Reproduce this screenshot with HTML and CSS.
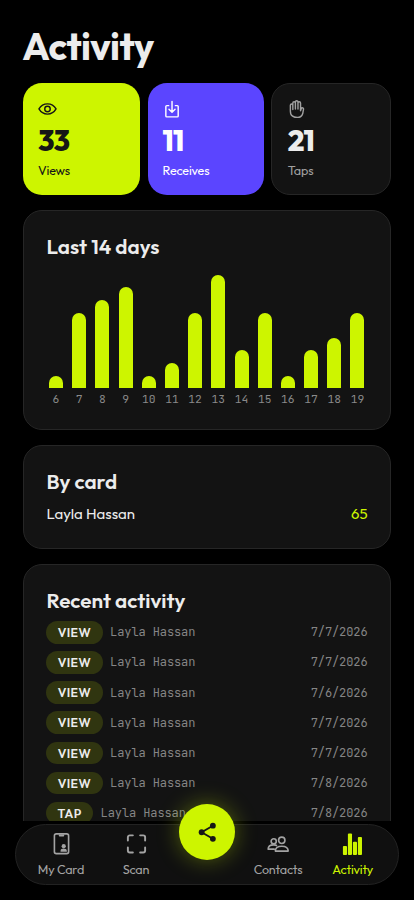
FILE: index.html
```html
<!DOCTYPE html>
<html lang="en">
<head>
<meta charset="utf-8">
<meta name="viewport" content="width=device-width, initial-scale=1">
<title>Activity</title>
<link rel="stylesheet" href="styles.css">
</head>
<body>
<main class="screen">
  <h1 class="title">Activity</h1>
  <section class="stats">
    <div class="stat stat-views">
      <svg class="stat-icon" viewBox="0 0 20 20"><path d="M1 10.500C3 7 6.300 5.100 10 5.100s7 1.900 9 5.400c-2 3.500-5.300 5.400-9 5.400S3 14 1 10.500Z"/><circle cx="10" cy="10.500" r="2.900"/></svg>
      <b class="num">33</b><span class="label">Views</span>
    </div>
    <div class="stat stat-receives">
      <svg class="stat-icon" viewBox="0 0 20 20"><path d="M6 7H4a1 1 0 0 0-1 1v9.800a1 1 0 0 0 1 1h11a1 1 0 0 0 1-1V8a1 1 0 0 0-1-1H13M9.500 2.500v11.300M6.300 10.700l3.200 3.200 3.200-3.200"/></svg>
      <b class="num">11</b><span class="label">Receives</span>
    </div>
    <div class="stat stat-taps">
      <svg class="stat-icon" viewBox="0 0 20 20"><path d="M2.500 13V6.500a1.300 1.300 0 0 1 2.600 0v4.500M5.100 10.500V4.300a1.350 1.350 0 0 1 2.700 0v6.200M7.800 10.500V3.100a1.350 1.350 0 0 1 2.700 0v7.400M10.500 10.500V4.300a1.350 1.350 0 0 1 2.700 0V12.300l.8-2.200c.6-1.300 2.600-.9 2.300.7l-.8 4.500c-.7 2.700-2.700 4.200-5.700 4.200-4.300 0-7.300-2.200-7.300-6.500"/></svg>
      <b class="num">21</b><span class="label">Taps</span>
    </div>
  </section>

  <section class="card chart-card">
    <h2 class="heading">Last 14 days</h2>
    <div class="chart">
      <div class="col"><i class="bar" style="height:12.5px"></i><span>6</span></div>
      <div class="col"><i class="bar" style="height:75.3px"></i><span>7</span></div>
      <div class="col"><i class="bar" style="height:87.8px"></i><span>8</span></div>
      <div class="col"><i class="bar" style="height:100.6px"></i><span>9</span></div>
      <div class="col"><i class="bar" style="height:12.5px"></i><span>10</span></div>
      <div class="col"><i class="bar" style="height:25.3px"></i><span>11</span></div>
      <div class="col"><i class="bar" style="height:75.3px"></i><span>12</span></div>
      <div class="col"><i class="bar" style="height:113px"></i><span>13</span></div>
      <div class="col"><i class="bar" style="height:37.7px"></i><span>14</span></div>
      <div class="col"><i class="bar" style="height:75.3px"></i><span>15</span></div>
      <div class="col"><i class="bar" style="height:12.5px"></i><span>16</span></div>
      <div class="col"><i class="bar" style="height:37.7px"></i><span>17</span></div>
      <div class="col"><i class="bar" style="height:50px"></i><span>18</span></div>
      <div class="col"><i class="bar" style="height:75.3px"></i><span>19</span></div>
    </div>
  </section>

  <section class="card by-card">
    <h2 class="heading">By card</h2>
    <div class="person"><span>Layla Hassan</span><span class="person-count">65</span></div>
  </section>

  <section class="card recent">
    <h2 class="heading">Recent activity</h2>
    <ul class="rows">
      <li><b class="pill">VIEW</b><span>Layla Hassan</span><time>7/7/2026</time></li>
      <li><b class="pill">VIEW</b><span>Layla Hassan</span><time>7/7/2026</time></li>
      <li><b class="pill">VIEW</b><span>Layla Hassan</span><time>7/6/2026</time></li>
      <li><b class="pill">VIEW</b><span>Layla Hassan</span><time>7/7/2026</time></li>
      <li><b class="pill">VIEW</b><span>Layla Hassan</span><time>7/7/2026</time></li>
      <li><b class="pill">VIEW</b><span>Layla Hassan</span><time>7/8/2026</time></li>
      <li><b class="pill pill-tap">TAP</b><span>Layla Hassan</span><time>7/8/2026</time></li>
    </ul>
  </section>
</main>

<nav class="nav">
  <a class="tab"><svg viewBox="0 0 24 24"><rect x="4.600" y="1.900" width="14.800" height="20.600" rx="2" fill="none" stroke="currentColor" stroke-width="1.700"/><path d="M9.200 2.500h5.600V4a.8.8 0 0 1-.8.8h-4a.8.8 0 0 1-.8-.8ZM11 20.700v-1c0-1.700 1.400-2.500 3.200-2.500s3.400.8 3.400 2.500v1Z" fill="currentColor"/><circle cx="14.300" cy="14.800" r="2.200" fill="currentColor"/></svg><span>My Card</span></a>
  <a class="tab"><svg viewBox="0 0 24 24"><path d="M3 8.800V5.500a2 2 0 0 1 2-2h3.200M15.800 3.500H19a2 2 0 0 1 2 2v3.300M21 16.100v3.300a2 2 0 0 1-2 2h-3.200M8.200 21.400H5a2 2 0 0 1-2-2v-3.300" fill="none" stroke="currentColor" stroke-width="2" stroke-linecap="round"/></svg><span>Scan</span></a>
  <a class="fab" aria-label="Share"><svg viewBox="0 0 24 24"><path d="M18 5 6 12l12 7" fill="none" stroke="currentColor" stroke-width="2"/><circle cx="18" cy="5" r="3.100" fill="currentColor"/><circle cx="6" cy="12" r="3.100" fill="currentColor"/><circle cx="18" cy="19" r="3.100" fill="currentColor"/></svg></a>
  <a class="tab"><svg viewBox="0 0 24 24"><g fill="none" stroke="currentColor" stroke-width="1.700" stroke-linejoin="round"><circle cx="15.400" cy="8.700" r="3.300"/><circle cx="7" cy="9.700" r="2.700"/><path d="M8.700 19.900c0-3.100 2.600-5 6.700-5s6.700 1.900 6.700 5ZM8.100 17.900H1.200c0-2.700 2.200-4.500 5.800-4.500 1.300 0 2.500.3 3.500.9"/></g></svg><span>Contacts</span></a>
  <a class="tab tab-activity"><svg viewBox="0 0 24 24"><g fill="currentColor"><rect x="2" y="14.700" width="4.300" height="9.200" rx="1"/><rect x="7.200" y="1.500" width="4.300" height="22.400" rx="1"/><rect x="12.400" y="10.200" width="4.300" height="13.700" rx="1"/><rect x="17.600" y="5.200" width="4.300" height="18.700" rx="1"/></g></svg><span>Activity</span></a>
</nav>
</body>
</html>
```
FILE: styles.css
```css
* { box-sizing: border-box; }
body {
  margin: 0;
  height: 900px;
  overflow: hidden;
  background: #000;
  color: #ececec;
  font-family: Outfit, Lato, sans-serif;
}
.screen {
  height: 820.7px;
  padding: 21px 23px 0;
  overflow: hidden;
}
.title {
  margin: 0 0 12px -0.7px;
  height: 50px;
  line-height: 50px;
  font-size: 38px;
  font-weight: 700;
  letter-spacing: -0.6px;
}
.stats {
  display: grid;
  grid-template-columns: 117.300px 116.500px 119.700px;
  gap: 7.250px;
}
.stat {
  height: 112px;
  padding: 16px 15px 0;
  border-radius: 19px;
  display: flex;
  flex-direction: column;
}
.stat-views { background: #cdf500; color: #161616; }
.stat-receives { background: #5b45ff; color: #fff; }
.stat-taps { background: #131313; border: 1px solid #262626; color: #ececec; padding: 15px 15.500px 0; }
.stat-icon {
  width: 19px;
  height: 19px;
  fill: none;
  stroke: currentColor;
  stroke-width: 1.500;
  stroke-linecap: round;
  stroke-linejoin: round;
}
.stat-taps .stat-icon, .stat-taps .label { color: #a0a0a0; }
.num { font-size: 29px; font-weight: 800; line-height: 34px; margin-top: 6px; letter-spacing: -0.900px; }
.label { font-size: 12.600px; line-height: 16px; margin-top: 3.500px; letter-spacing: -0.180px; }

.card {
  margin-top: 15px;
  padding: 22px 22.500px 0;
  background: #131313;
  border: 1px solid #262626;
  border-radius: 19px;
}
.heading { margin: 0; font-size: 20.700px; line-height: 26px; font-weight: 600; }
.chart-card { height: 220px; }
.chart {
  display: flex;
  justify-content: space-between;
  align-items: flex-end;
  height: 147px;
  padding: 0 3px 0 2.500px;
}
.col { width: 14px; display: flex; flex-direction: column; align-items: center; }
.bar { width: 14px; background: #cdf500; border-radius: 7px 7px 0 0; }
.col span {
  margin-top: 4px;
  font: 11.300px/14px "JetBrains Mono", "DejaVu Sans Mono", monospace;
  color: #8a8a8a;
}
.by-card { height: 103.500px; }
.person { display: flex; justify-content: space-between; margin-top: 10px; font-size: 15px; line-height: 20px; }
.person-count { color: #cdf500; font-weight: 450; }
.recent { height: 400px; }
.rows { list-style: none; margin: 8.500px 0 0; padding: 0; display: grid; gap: 7.550px; }
.rows li {
  display: flex;
  align-items: center;
  height: 22.600px;
  font: 12px/16px "JetBrains Mono", "DejaVu Sans Mono", monospace;
  letter-spacing: -0.1px;
  color: #858585;
}
.pill {
  width: 56.500px;
  height: 22.600px;
  margin-left: -0.400px;
  margin-right: 7.500px;
  border-radius: 12px;
  background: #303510;
  color: #ececec;
  font: 650 12.300px/23px Outfit, Lato, sans-serif;
  letter-spacing: 0.400px;
  text-align: center;
}
.pill-tap { width: 47px; }
.rows time { margin-left: auto; }

.nav {
  width: 384px;
  height: 61px;
  margin: 3.300px 0 0 15px;
  padding: 0 7px 0 6px;
  display: grid;
  grid-template-columns: 78px 72px 70px 72px 77.500px;
  background: #101010;
  border: 1px solid #222;
  border-radius: 31px;
}
.tab {
  display: flex;
  flex-direction: column;
  align-items: center;
  padding-top: 7.500px;
  color: #a3a3a3;
  font-size: 12.600px;
  line-height: 16px;
  letter-spacing: -0.180px;
}
.tab svg { width: 23px; height: 23px; margin-bottom: 5.500px; }
.tab-activity { color: #cdf500; }
.fab {
  width: 56.600px;
  height: 56.600px;
  margin-top: -21.200px;
  justify-self: center;
  border-radius: 50%;
  display: grid;
  place-items: center;
  background: #cdf500;
  color: #161616;
  box-shadow: 0 0 22px rgba(205, 245, 0, 0.35);
}
.fab svg { width: 22.500px; height: 22.500px; }
```
